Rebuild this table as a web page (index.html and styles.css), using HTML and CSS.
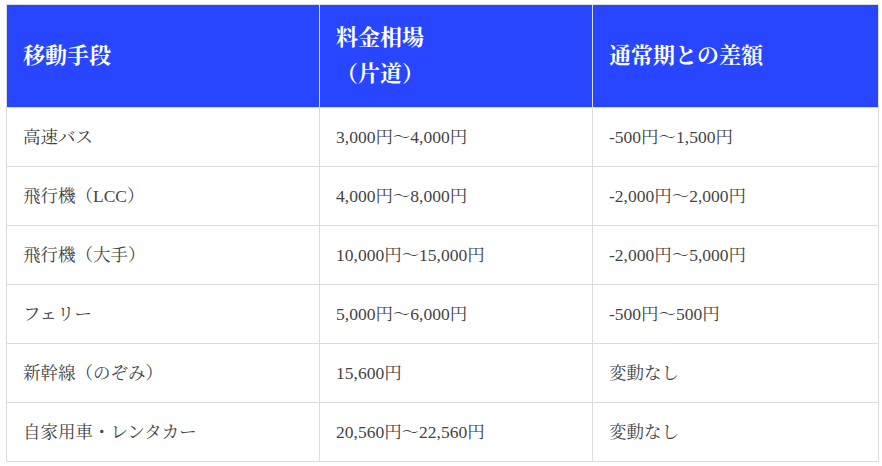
FILE: index.html
```html
<!DOCTYPE html>
<html lang="ja">
<head>
<meta charset="utf-8">
<link rel="stylesheet" href="styles.css">
</head>
<body>
<div class="wrap">
<table class="price-table">
  <thead>
    <tr>
      <th class="c1">移動手段</th>
      <th class="c2">料金相場<br>（片道）</th>
      <th class="c3">通常期との差額</th>
    </tr>
  </thead>
  <tbody>
    <tr><td>高速バス</td><td>3,000円～4,000円</td><td>-500円～1,500円</td></tr>
    <tr><td>飛行機（LCC）</td><td>4,000円～8,000円</td><td>-2,000円～2,000円</td></tr>
    <tr><td>飛行機（大手）</td><td>10,000円～15,000円</td><td>-2,000円～5,000円</td></tr>
    <tr><td>フェリー</td><td>5,000円～6,000円</td><td>-500円～500円</td></tr>
    <tr><td>新幹線（のぞみ）</td><td>15,600円</td><td>変動なし</td></tr>
    <tr><td>自家用車・レンタカー</td><td>20,560円～22,560円</td><td>変動なし</td></tr>
  </tbody>
</table>
</div>
</body>
</html>
```
FILE: styles.css
```css
html, body {
  margin: 0;
  padding: 0;
  background: #fff;
}
.wrap {
  padding: 4px 4px 0 6px;
}
.price-table {
  width: 872px;
  border-collapse: collapse;
  table-layout: fixed;
  font-family: "Liberation Serif", "Noto Serif CJK JP", "Noto Sans CJK JP", serif;
}
.price-table th,
.price-table td {
  box-sizing: border-box;
  border: 1px solid #dcdcdc;
  text-align: left;
  vertical-align: middle;
  padding: 0 16px;
}
.price-table th {
  background: #2846ff;
  color: #fff;
  font-size: 22px;
  font-weight: bold;
  line-height: 36px;
  height: 103px;
}
.price-table .c1 { width: 313px; }
.price-table .c2 { width: 273px; }
.price-table .c3 { width: 286px; }
.price-table td {
  color: #444;
  font-size: 17.5px;
  line-height: 28px;
  height: 59px;
}
```
